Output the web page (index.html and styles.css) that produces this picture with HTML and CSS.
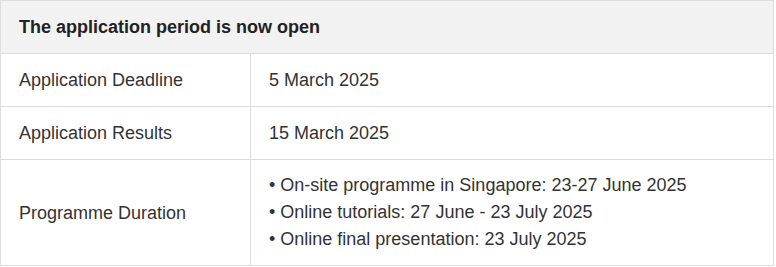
FILE: index.html
```html
<!DOCTYPE html>
<html lang="en">
<head>
<meta charset="utf-8">
<title>Application period</title>
<link rel="stylesheet" href="styles.css">
</head>
<body>
<table class="info">
  <colgroup>
    <col class="col-label">
    <col class="col-value">
  </colgroup>
  <thead>
    <tr><th colspan="2" class="head">The application period is now open</th></tr>
  </thead>
  <tbody>
    <tr><td class="cell">Application Deadline</td><td class="cell">5 March 2025</td></tr>
    <tr><td class="cell">Application Results</td><td class="cell">15 March 2025</td></tr>
    <tr>
      <td class="cell">Programme Duration</td>
      <td class="cell list-cell">
        <ul class="list">
          <li>• On-site programme in Singapore: 23-27 June 2025</li>
          <li>• Online tutorials: 27 June - 23 July 2025</li>
          <li>• Online final presentation: 23 July 2025</li>
        </ul>
      </td>
    </tr>
  </tbody>
</table>
</body>
</html>
```

FILE: styles.css
```css
html, body {
  margin: 0;
  padding: 0;
  background: #ffffff;
}
.info {
  border-collapse: collapse;
  table-layout: fixed;
  width: 774px;
  font-family: "Liberation Sans", Arial, sans-serif;
  font-size: 18px;
  color: #333333;
}
.col-label { width: 250px; }
.info th, .info td {
  border: 1px solid #dddddd;
  padding: 12px 18px;
  text-align: left;
  vertical-align: middle;
}
.head {
  background: #f2f2f2;
  font-weight: bold;
  color: #222222;
  line-height: 28px;
}
.cell {
  line-height: 28px;
}
.list {
  list-style: none;
  margin: 0;
  padding: 0;
}
.list li {
  line-height: 27px;
}
```
